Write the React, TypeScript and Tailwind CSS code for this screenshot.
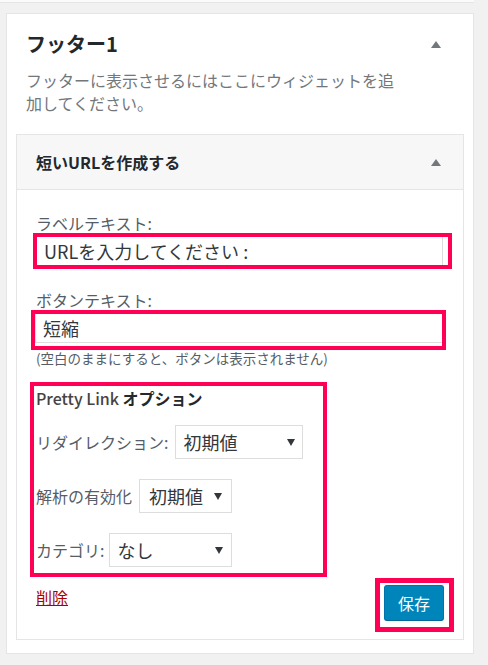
import React from "react";

const Up = () => (
  <svg width="10" height="7" viewBox="0 0 10 7" className="block">
    <path d="M5 0 L10 7 L0 7 Z" fill="#72777c" />
  </svg>
);

const Down = () => (
  <svg width="8" height="7" viewBox="0 0 8 7" className="block">
    <path d="M0 0 L8 0 L4 7 Z" fill="#32373c" />
  </svg>
);

function Select({ w, text, pl, pr }: { w: string; text: string; pl: string; pr: string }) {
  return (
    <div className={`${w} ${pl} ${pr} h-[34px] border border-[#dddddd] bg-white flex items-center justify-between text-[18px] text-[#32373c] leading-none`}>
      <span>{text}</span>
      <Down />
    </div>
  );
}

export default function App() {
  return (
    <div
      className="w-[488px] min-h-[665px] bg-[#f1f1f1] overflow-hidden"
      style={{ fontFamily: '"Noto Sans CJK JP", "Noto Sans", sans-serif' }}
    >
      <div className="w-[474px] h-[3px] bg-[#fafafa] border-b border-[#e5e5e5]" />
      <div className="ml-[6px] mt-[10px] w-[468px] h-[641px] border border-[#e5e5e5] bg-white">
        <div className="flex items-center justify-between pl-[19px] pr-[32px] mt-[16px] h-[28px]">
          <div className="text-[20px] leading-[28px] font-bold text-[#23282d]">フッター1</div>
          <Up />
        </div>
        <div className="pl-[19px] mt-[11px] text-[16px] leading-[23px] text-[#72777c]">
          フッターに表示させるにはここにウィジェットを追<br />加してください。
        </div>
        <div className="ml-[9px] mt-[19px] w-[448px] h-[506px] border border-[#e5e5e5] bg-white">
          <div className="h-[55px] bg-[#f7f7f7] border-b border-[#e5e5e5] flex items-center justify-between pl-[19px] pr-[22px]">
            <div className="text-[16px] leading-[22px] font-bold text-[#23282d]">短いURLを作成する</div>
            <Up />
          </div>
          <div className="flex flex-col">
            <div className="ml-[19px] mt-[23px] text-[16px] leading-[20px] text-[#555d66]">ラベルテキスト:</div>
            <div className="ml-[16px] w-[419px] h-[36px] border-4 border-[#ff0055] bg-white">
              <div className="w-[406px] h-full border-r border-[#dddddd] pl-[7px] flex items-center text-[18px] text-[#32373c] leading-none">
                URLを入力してください :
              </div>
            </div>
            <div className="ml-[19px] mt-[21px] text-[16px] leading-[20px] text-[#555d66]">ボタンテキスト:</div>
            <div className="ml-[14px] w-[415px] h-[40px] border-4 border-[#ff0055] bg-white">
              <div className="h-[29px] border-l border-b border-[#dddddd] pl-[7px] flex items-center text-[18px] text-[#32373c] leading-none">
                短縮
              </div>
            </div>
            <div className="ml-[19px] text-[13.5px] leading-[16px] text-[#555d66]">(空白のままにすると、ボタンは表示されません)</div>
            <div className="ml-[13px] mt-[16px] w-[297px] h-[195px] border-4 border-[#ff0055] pl-[2px] pt-[2px]">
              <div className="text-[16px] leading-[20px] text-[#23282d]">
                <span className="font-medium text-[#444]">Pretty Link</span>{" "}
                <span className="font-bold">オプション</span>
              </div>
              <div className="mt-[17px] flex items-center gap-[7px]">
                <span className="text-[16px] text-[#555d66]">リダイレクション:</span>
                <Select w="w-[128px]" text="初期値" pl="pl-[7px]" pr="pr-[7px]" />
              </div>
              <div className="mt-[20px] flex items-center gap-[7px]">
                <span className="text-[16px] text-[#555d66]">解析の有効化</span>
                <Select w="w-[93px]" text="初期値" pl="pl-[9px]" pr="pr-[9px]" />
              </div>
              <div className="mt-[20px] flex items-center gap-[5px]">
                <span className="text-[16px] text-[#555d66]">カテゴリ:</span>
                <Select w="w-[123px]" text="なし" pl="pl-[7px]" pr="pr-[8px]" />
              </div>
            </div>
            <div className="mt-[1px] flex items-start justify-between">
              <a className="ml-[19px] mt-[9px] text-[16px] leading-[20px] text-[#aa0000] underline">削除</a>
              <div className="mr-[9px] w-[79px] h-[54px] border-[5px] border-[#ff0055] pl-[4px] pt-[2px]">
                <div className="w-[60px] h-[36px] rounded-[3px] bg-[#0085ba] border border-[#0073aa] border-b-[#006799] flex items-center justify-center text-white text-[16px] leading-none">
                  保存
                </div>
              </div>
            </div>
          </div>
        </div>
      </div>
    </div>
  );
}
